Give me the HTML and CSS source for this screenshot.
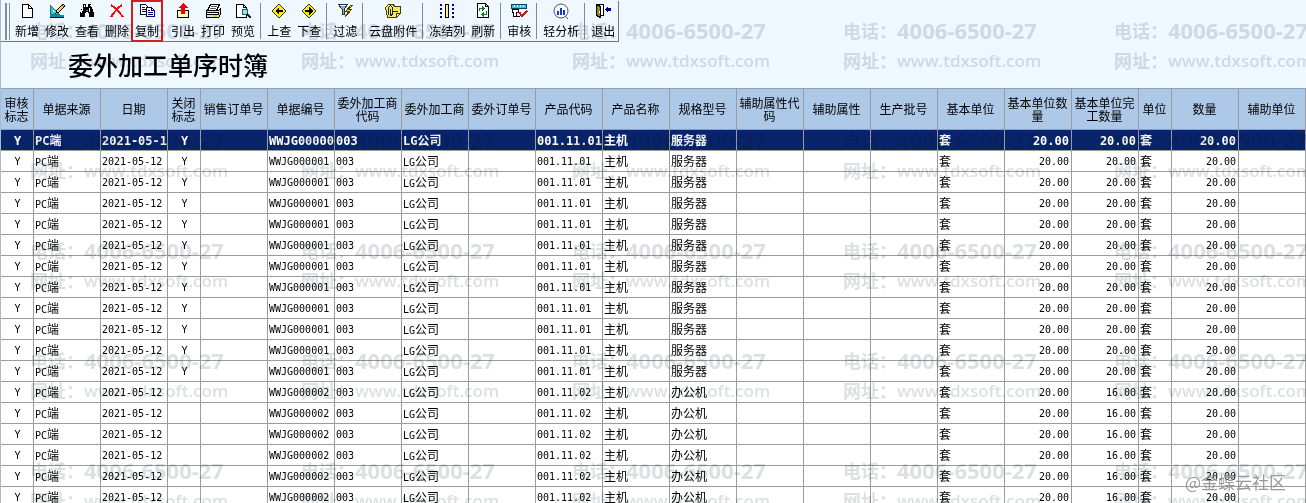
FILE: index.html
```
<!DOCTYPE html>
<html lang="zh-CN">
<head>
    <meta charset="UTF-8">
    <meta name="viewport" content="width=device-width, initial-scale=1.0">
    <title>委外加工单序时簿</title>
    <link rel="stylesheet" href="styles.css">
</head>
<body>
    <div class="toolbar">
        <span class="grip"></span>
        <button type="button">
            <svg viewBox="0 0 18 16"><path d="M4.500 1.500h6l4 4v9h-10z" fill="#fff" stroke="#000"/><path d="M10.500 1.500v4h4" fill="none" stroke="#000"/></svg>
            新增
        </button>
        <button type="button">
            <svg viewBox="0 0 18 16"><path d="M2.500 2.500v9h9z" fill="#2fc3cc" stroke="#087d88"/><path d="M5 7v2h2z" fill="#fff"/><path d="M2 12h14v3h-14z" fill="#0b8bb0"/><path d="M2 14.500h14" stroke="#003"/><path d="M15 1l2 2-6 6-3 1 1-3z" fill="#f5d63c" stroke="#000"/><path d="M14 2l2 2" stroke="#a33"/></svg>
            修改
        </button>
        <button type="button">
            <svg viewBox="0 0 18 16"><path d="M5 1h3v3h2V1h3v3l1 1 2 5v4h-5v-4h-1V9H8v1H7v4H2v-4l2-5 1-1z"/><path d="M5 5L3 10M6 2v2M11 5v4M12 2v1" stroke="#fff"/><path d="M8 7h2" stroke="#888"/></svg>
            查看
        </button>
        <button type="button">
            <svg viewBox="0 0 18 16"><path d="M3 2q6 4 12 12M14 2Q8 6 3 14" fill="none" stroke="#f01010" stroke-width="2"/></svg>
            删除
        </button>
        <button type="button" class="marked">
            <svg viewBox="0 0 18 16"><path d="M2.500 1.500h5l3 3v7h-8z" fill="#fff" stroke="#113"/><path d="M4 4.500h3M4 6.500h5M4 8.500h5" stroke="#113"/><path d="M8.500 4.500h5l3 3v6h-8z" fill="#fff" stroke="#000080"/><path d="M13.500 4.500v3h3" fill="none" stroke="#000080"/><path d="M10 7.500h2M10 9.500h5M10 11.500h5" stroke="#000080"/></svg>
            复制
        </button>
        <span class="sep hidden"></span>
        <button type="button">
            <svg viewBox="0 0 18 16"><path d="M3.500 7.500h11v7h-11z" fill="#fff6bd" stroke="#000"/><path d="M9 0l5 5h-3v6H7V5H4z" fill="#f00000"/></svg>
            引出
        </button>
        <button type="button">
            <svg viewBox="0 0 18 16"><path d="M6.500 1.500h9l-3 6h-9z" fill="#fff" stroke="#000"/><path d="M7 3.500h6M6 5.500h6" stroke="#555"/><path d="M2.500 7.500h12l2-2v6l-2 3h-12z" fill="#ddd" stroke="#000"/><path d="M2.500 9.500h12v2h-12z" fill="#fff" stroke="#000"/><path d="M10 13h3" stroke="#dc0" stroke-width="2"/></svg>
            打印
        </button>
        <button type="button">
            <svg viewBox="0 0 18 16"><path d="M2.500 1.500h7l3 3v10h-10z" fill="#fff" stroke="#000"/><path d="M9.500 1.500v3h3" fill="none" stroke="#000"/><circle cx="11" cy="9" r="3" fill="#8fe3ee" stroke="#357"/><path d="M13 11l4 4" stroke="#123" stroke-width="2"/></svg>
            预览
        </button>
        <span class="sep"></span>
        <button type="button">
            <svg viewBox="0 0 18 16"><path d="M9 1l7 7-7 7-7-7z" fill="#ffed00" stroke="#333"/><path d="M13 8H7" stroke="#000" stroke-width="2"/><path d="M9 4v8L5 8z"/></svg>
            上查
        </button>
        <button type="button">
            <svg viewBox="0 0 18 16"><path d="M9 1l7 7-7 7-7-7z" fill="#ffed00" stroke="#333"/><path d="M5 8h6" stroke="#000" stroke-width="2"/><path d="M9 4v8l4-4z"/></svg>
            下查
        </button>
        <span class="sep"></span>
        <button type="button">
            <svg viewBox="0 0 18 16"><path d="M2 1h10L8 6v5H6V6z" fill="#9ab" stroke="#234"/><path d="M4 2.500h6" stroke="#fff"/><path d="M15 2l-5 6h3l-4 6 7-8h-3l4-4z" fill="#ffe600" stroke="#554400"/></svg>
            过滤
        </button>
        <span class="sep"></span>
        <button type="button">
            <svg viewBox="0 0 18 16"><path d="M1.500 4.500l3-3h5l1 2h6v7l-4 4h-9z" fill="#f6ea6a" stroke="#443c00"/><path d="M12.500 14v-3.500h4" fill="#fff" stroke="#443c00"/><path d="M4.500 11.500v-7l2-2 2 2v7l-2 1v-7M9 8.500h5" fill="none" stroke="#222"/></svg>
            云盘附件
        </button>
        <span class="sep"></span>
        <button type="button">
            <svg viewBox="0 0 18 16"><path d="M7.500 1.500h3v13h-3z" fill="#fff08a" stroke="#000"/><path d="M2 2h2M2 6h2M2 10h2M2 14h2M14 2h2M14 6h2M14 10h2M14 14h2" stroke="#000080" stroke-width="2"/></svg>
            冻结列
        </button>
        <button type="button">
            <svg viewBox="0 0 18 16"><path d="M3.500 .5h8l3 3v11h-11z" fill="#fff" stroke="#000"/><path d="M11.500 .5v3h3" fill="none" stroke="#000"/><path d="M5.500 8V5.500h4M12.500 8v3.500h-4" fill="none" stroke="#078020"/><path d="M8 3l3 2.500-3 2.500zM10 9v5l-3-2.500z" fill="#078020"/></svg>
            刷新
        </button>
        <span class="sep"></span>
        <button type="button">
            <svg viewBox="0 0 18 16"><path d="M1.500 1.500h15v4h-15z" fill="#27c8ef" stroke="#045"/><path d="M4.500 2v2M7.500 2v2M10.500 2v2M13.500 2v2" stroke="#fff"/><path d="M2.500 6.500h6v3h-2v4h-3v-4h-1z" fill="#fff" stroke="#000"/><path d="M6 13.500h4" stroke="#000"/><path d="M9 9l3 4 5-5" fill="none" stroke="#d01010" stroke-width="2"/></svg>
            审核
        </button>
        <span class="sep"></span>
        <button type="button">
            <svg class="smooth" viewBox="0 0 18 16"><circle cx="9" cy="8" r="7" fill="#fff" stroke="#456"/><path d="M13 13l3 3" stroke="#456"/><path d="M6 8v4M9 5v7M12 7v5" stroke="#1238c8" stroke-width="2"/></svg>
            轻分析
        </button>
        <span class="sep"></span>
        <button type="button">
            <svg viewBox="0 0 18 16"><path d="M2.500 1.500h7v11h-7z" fill="#fff" stroke="#000"/><path d="M2.500 1.500l4 2v11l-4-2z" fill="#929000" stroke="#000"/><path d="M5 8v2" stroke="#fff"/><path d="M14 3v7l-3-3.500zM14 5h3v3h-3z" fill="#000090"/></svg>
            退出
        </button>
    </div>

    <h1>委外加工单序时簿</h1>

    <table>
        <colgroup>
            <col class="narrow"><col span="2"><col class="narrow"><col span="14"><col class="narrow"><col span="2">
        </colgroup>
        <thead>
            <tr>
                <th>审核标志</th>
                <th>单据来源</th>
                <th>日期</th>
                <th>关闭标志</th>
                <th>销售订单号</th>
                <th>单据编号</th>
                <th>委外加工商代码</th>
                <th>委外加工商</th>
                <th>委外订单号</th>
                <th>产品代码</th>
                <th>产品名称</th>
                <th>规格型号</th>
                <th>辅助属性代码</th>
                <th>辅助属性</th>
                <th>生产批号</th>
                <th>基本单位</th>
                <th>基本单位数量</th>
                <th>基本单位完工数量</th>
                <th>单位</th>
                <th>数量</th>
                <th>辅助单位</th>
            </tr>
        </thead>
        <tbody id="rows"></tbody>
    </table>

    <div class="watermark" id="watermark"></div>
    <div class="community">@金蝶云社区</div>

    <script>
        const orders = [
            { count: 12, closed: 'Y', no: 'WWJG000001', code: '001.11.01', spec: '服务器', done: '20.00' },
            { count: 6, closed: '', no: 'WWJG000002', code: '001.11.02', spec: '办公机', done: '16.00' }
        ];
        const centered = [0, 3];
        const numeric = [16, 17, 19];

        // Chinese text is set one size larger than the codes beside it
        function format(text) {
            return text.replace(/[\u4e00-\u9fa5]+/g, '<span class="zh">$&</span>');
        }

        const tbody = document.getElementById('rows');
        orders.forEach(function (o) {
            for (let i = 0; i < o.count; i++) {
                const values = ['Y', 'PC端', '2021-05-12', o.closed, '', o.no, '003', 'LG公司', '',
                    o.code, '主机', o.spec, '', '', '', '套', '20.00', o.done, '套', '20.00', ''];
                const tr = tbody.insertRow();
                values.forEach(function (value, n) {
                    const td = tr.insertCell();
                    td.innerHTML = format(value);
                    if (centered.includes(n)) td.className = 'center';
                    if (numeric.includes(n)) td.className = 'num';
                });
            }
        });
        tbody.rows[0].className = 'selected';

        const watermark = document.getElementById('watermark');
        for (let i = 0; i < 25; i++) {
            watermark.innerHTML += '<div class="mark">' +
                '<p class="phone"><span>电话：</span>4006-6500-27</p>' +
                '<p class="site"><span>网址：</span>www.tdxsoft.com</p></div>';
        }
    </script>
</body>
</html>
```
FILE: styles.css
```
* {
    box-sizing: border-box;
}
body {
    position: relative;
    height: 100vh;
    margin: 0;
    padding-top: 1px;
    overflow: hidden;
    border-left: 1px solid #a9bccb;
    background-color: #eff7ff;
    color: #000;
    font-family: "Noto Sans CJK SC", sans-serif;
    font-size: 12px;
}
.toolbar {
    display: flex;
    width: fit-content;
    padding-left: 4px;
    border-right: 1px solid #777;
    border-bottom: 1px solid #777;
}
.grip {
    width: 5px;
    margin: 2px 2px 1px 0;
    border-left: 2px solid #8a8f96;
    border-right: 1px solid #8a8f96;
}
.toolbar button {
    display: flex;
    flex-direction: column;
    align-items: center;
    gap: 4px;
    padding: 2px 3px;
    border: none;
    background: none;
    color: #000;
    font-family: inherit;
    font-size: 12px;
    line-height: 16px;
    white-space: nowrap;
    cursor: pointer;
}
.toolbar button.marked {
    outline: 2px solid #d22020;
    outline-offset: -1px;
}
.toolbar svg {
    width: 18px;
    height: 16px;
    shape-rendering: crispEdges;
}
.toolbar svg.smooth {
    shape-rendering: auto;
}
.sep {
    width: 1px;
    margin: 2px 3px 2px 2px;
    background-color: #888;
}
.sep.hidden {
    visibility: hidden;
}
h1 {
    margin: 0;
    padding: 3px 0 5px 67px;
    font-size: 25px;
    font-weight: 500;
    line-height: 38px;
}
table {
    width: 100%;
    table-layout: fixed;
    border-collapse: separate;
    border-spacing: 0;
    border-top: 1px solid #87a3ba;
    background-color: #fff;
}
.narrow {
    width: 33px;
}
th {
    height: 41px;
    padding: 0 3px 1px 2px;
    border-right: 1px solid #9c9c9c;
    border-bottom: 1px solid #9c9c9c;
    background-color: #aec8e8;
    font-weight: normal;
    line-height: 13px;
}
td {
    height: 21px;
    padding: 1px 0 0 1px;
    overflow: hidden;
    border-right: 1px solid #9c9c9c;
    border-bottom: 1px solid #9c9c9c;
    font-family: "DejaVu Sans Mono", "Noto Sans CJK SC", monospace;
    font-size: 10px;
    line-height: 16px;
    white-space: nowrap;
}
.zh {
    font-family: "Noto Sans CJK SC", sans-serif;
    font-size: 12px;
}
.center {
    text-align: center;
}
.num {
    padding-right: 2px;
    text-align: right;
}
.selected td {
    background-color: #08246b;
    color: #fff;
    font-size: 12px;
    font-weight: bold;
}
.watermark {
    position: absolute;
    top: 15px;
    left: 29px;
    display: grid;
    grid-template-columns: repeat(5, 271px);
    grid-auto-rows: 110px;
    color: #dde0e3;
    font-family: "Open Sans", "Noto Sans CJK SC", sans-serif;
    mix-blend-mode: multiply;
    pointer-events: none;
}
.mark p {
    display: flex;
    align-items: center;
    height: 30px;
    margin: 0;
    white-space: nowrap;
}
.mark span {
    width: 54px;
    font-family: "Noto Sans CJK SC", sans-serif;
    font-size: 18px;
    font-weight: bold;
}
.mark .phone {
    font-size: 22px;
    font-weight: bold;
}
.mark .site {
    font-size: 17px;
    font-weight: 600;
}
.community {
    position: absolute;
    right: 20px;
    bottom: 9px;
    color: #999;
    font-size: 17px;
    line-height: 24px;
}
```
